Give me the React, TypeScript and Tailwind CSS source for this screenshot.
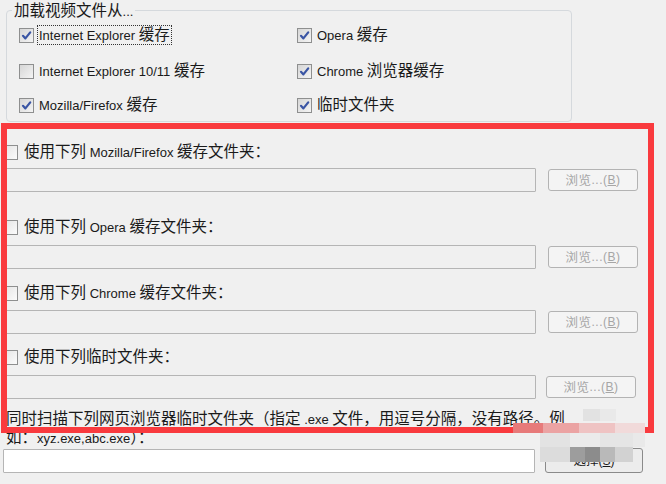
import type { ReactNode } from 'react'

// split a label into latin / CJK runs: the CJK glyphs in the shot are wider than the latin ones
function T({ s, small = false }: { s: string; small?: boolean }) {
  const parts = s.split(/([\u3000-\u303f\u4e00-\u9fff\uff00-\uffef]+)/)
  return (
    <>
      {parts.map((p, i) =>
        i % 2 ? (
          <span
            key={i}
            className={
              small
                ? "font-['Noto_Sans_CJK_SC',sans-serif] text-[12.5px] leading-none"
                : "font-['Noto_Sans_CJK_SC',sans-serif] text-[15.5px] leading-none"
            }
          >
            {p}
          </span>
        ) : (
          p
        )
      )}
    </>
  )
}

function Check({ checked, gray = false }: { checked: boolean; gray?: boolean }) {
  return (
    <span
      className={`flex h-[15px] w-[15px] shrink-0 items-center justify-center border border-[#8e8f8f] ${
        gray ? 'bg-gradient-to-br from-[#d6d6d6] to-[#f4f4f4]' : 'bg-gradient-to-br from-[#e4e4e4] to-[#fbfbfb]'
      }`}
    >
      {checked && (
        <svg width="11" height="11" viewBox="0 0 11 11">
          <path d="M2 5.8 L4.4 8.4 L9.2 2.4" fill="none" stroke="#3a55a4" strokeWidth="2.2" strokeLinecap="round" strokeLinejoin="round" />
        </svg>
      )}
    </span>
  )
}

function GroupItem({ label, checked, focus = false }: { label: string; checked: boolean; focus?: boolean }) {
  return (
    <div className="flex h-[18px] items-center gap-[3px]">
      <Check checked={checked} gray />
      <span className={`leading-[17px] ${focus ? 'border border-dotted border-[#333] px-[1px]' : 'px-[2px]'}`}>
        <T s={label} />
      </span>
    </div>
  )
}

function BrowseButton({ className = '' }: { className?: string }) {
  return (
    <button
      disabled
      className={`flex h-[22px] w-[90px] shrink-0 items-center justify-center rounded-[3px] border border-[#b3b3b3] bg-[#f4f4f4] text-[12px] leading-none tracking-[0.5px] text-[#a6a6a6] ${className}`}
    >
      <T s="浏览" small />
      ...(<span className="underline">B</span>)
    </button>
  )
}

function FolderRow({ label, mt, inputMt, buttonMl = 'ml-[12px]' }: { label: string; mt: string; inputMt: string; buttonMl?: string }) {
  return (
    <>
      <div className={`flex h-[18px] items-center gap-[6px] leading-[18px] ${mt}`}>
        <Check checked={false} />
        <span>
          <T s={label} />
        </span>
      </div>
      <div className={`flex items-center ${inputMt}`}>
        <div className="h-[24px] w-[533px] rounded-[1px] border border-[#b5b5b5] bg-[#f0f0f0]" />
        <BrowseButton className={buttonMl} />
      </div>
    </>
  )
}

const mosaic: [number, number, number, number, string][] = [
  [583, 409, 17, 12, '#e2e2e2'],
  [600, 409, 16, 12, '#e9e9e9'],
  [513, 423, 30, 10, '#e77a7a'],
  [543, 423, 36, 10, '#eba3a3'],
  [579, 423, 36, 10, '#efc3c3'],
  [615, 423, 30, 10, '#f1dada'],
  [540, 433, 30, 14, '#e3e3e3'],
  [570, 433, 30, 14, '#ebebeb'],
  [600, 433, 33, 14, '#e5e5e5'],
  [633, 433, 12, 14, '#e9e9e9'],
  [540, 447, 30, 15, '#dcdcdc'],
  [570, 447, 15, 15, '#9d9d9d'],
  [585, 447, 15, 15, '#8c8c8c'],
  [600, 447, 15, 15, '#b9b9b9'],
  [615, 447, 18, 15, '#d2d2d2'],
]

export default function App(): ReactNode {
  return (
    <div className="relative h-[484px] w-[666px] overflow-hidden bg-[#f0f0f0] font-['Liberation_Sans',Arial,sans-serif] text-[13px] text-[#1a1a1a]">
      {/* group box */}
      <fieldset className="ml-[6px] mt-[2px] h-[120px] w-[566px] rounded-[4px] border border-[#d5d9dd]">
        <legend className="ml-[5px] h-[16px] px-[2px] leading-[16px]">
          <T s="加载视频文件从..." />
        </legend>
        <div className="flex flex-col pl-[12px]">
          <div className="mt-[8px] flex">
            <div className="w-[278px]">
              <GroupItem label="Internet Explorer 缓存" checked focus />
            </div>
            <GroupItem label="Opera 缓存" checked />
          </div>
          <div className="mt-[18px] flex">
            <div className="w-[278px]">
              <GroupItem label="Internet Explorer 10/11 缓存" checked={false} />
            </div>
            <GroupItem label="Chrome 浏览器缓存" checked />
          </div>
          <div className="mt-[16px] flex">
            <div className="w-[278px]">
              <GroupItem label="Mozilla/Firefox 缓存" checked />
            </div>
            <GroupItem label="临时文件夹" checked />
          </div>
        </div>
      </fieldset>

      {/* folder overrides */}
      <div className="flex flex-col pl-[3px]">
        <FolderRow label="使用下列 Mozilla/Firefox 缓存文件夹：" mt="mt-[21px]" inputMt="mt-[7px]" />
        <FolderRow label="使用下列 Opera 缓存文件夹：" mt="mt-[26px]" inputMt="mt-[9px]" />
        <FolderRow label="使用下列 Chrome 缓存文件夹：" mt="mt-[15px]" inputMt="mt-[8px]" />
        <FolderRow label="使用下列临时文件夹：" mt="mt-[14px]" inputMt="mt-[9px]" buttonMl="ml-[10px]" />

        <p className="mt-[11px] pl-[3px] leading-[19px]">
          <span className="block h-[19px]">
            <T s="同时扫描下列网页浏览器临时文件夹（指定 .exe 文件，用逗号分隔，没有路径。例" />
          </span>
          <span className="block h-[19px]">
            <T s="如：xyz.exe,abc.exe）：" />
          </span>
        </p>
        <div className="flex items-center">
          <div className="h-[24px] w-[532px] rounded-[1px] border border-[#b5b5b5] bg-white" />
          <button className="ml-[10px] flex h-[25px] w-[98px] items-center justify-center rounded-[3px] border border-[#8a8a8a] bg-[#ececec] text-[12px] leading-none">
            <T s="选择" small />
            (<span className="underline">S</span>)
          </button>
        </div>
      </div>

      {/* red annotation box */}
      <div className="absolute left-[1px] top-[123px] h-[310px] w-[653px] border-[6px] border-[#f93a3e]" />

      {/* pixelated watermark */}
      {mosaic.map(([x, y, w, h, c], i) => (
        <div key={i} className="absolute" style={{ left: x, top: y, width: w, height: h, background: c }} />
      ))}
    </div>
  )
}
